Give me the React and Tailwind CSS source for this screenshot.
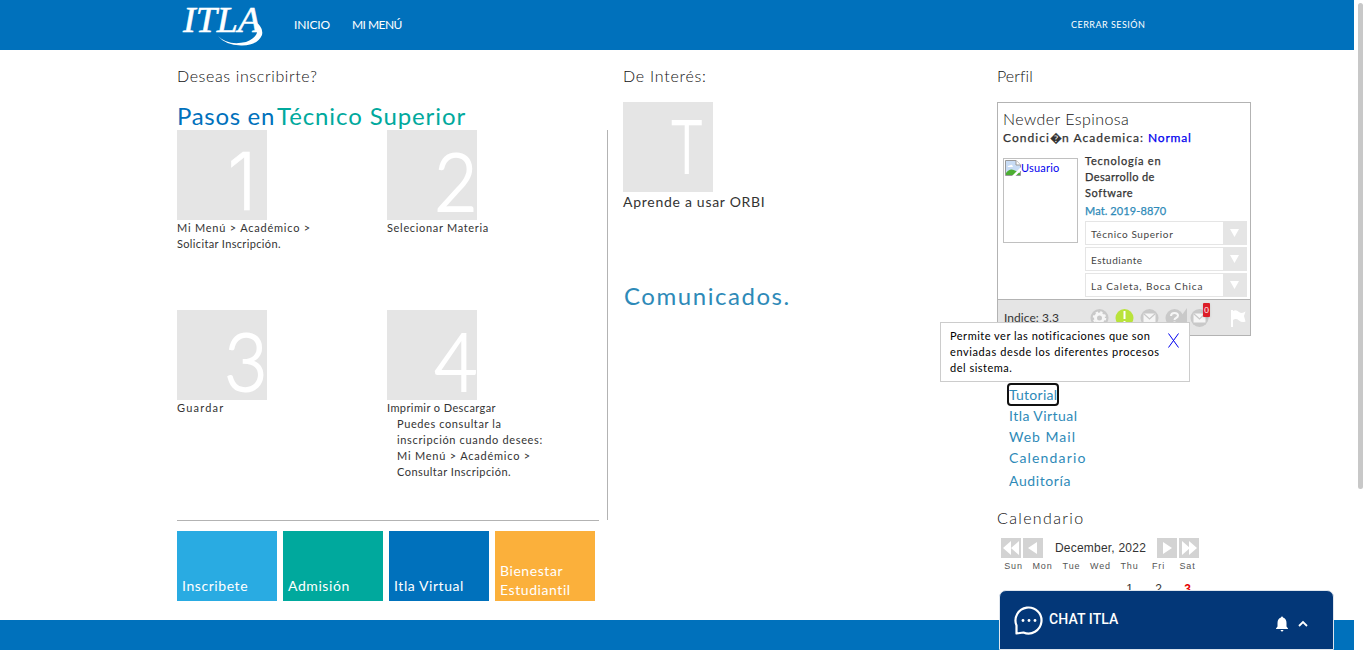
import React from "react";

function Step({ n, glyph = "", children }) {
  return (
    <div className="w-[210px] h-[180px]">
      <div className={`size-[90px] bg-[#e5e5e5] text-white text-[80px] font-light text-right leading-[101px] ${glyph}`}>
        <span className="inline-block origin-right scale-x-[.93]">{n}</span>
      </div>
      <div className="text-[11px] leading-4 whitespace-nowrap">{children}</div>
    </div>
  );
}

function Tile({ color, children }) {
  return (
    <div className={`flex items-end w-[100px] h-[70px] pl-[5px] text-white text-sm leading-[19px] tracking-[.57px] ${color}`}>
      <div>{children}</div>
    </div>
  );
}

function Select({ children }) {
  return (
    <div className="flex w-[162px] h-6 border border-[#e5e5e5] text-[10px] text-[#444]">
      <div className="w-[137px] pl-[5px] leading-[25px] whitespace-nowrap">{children}</div>
      <div className="flex-1 bg-[#e5e5e5] flex items-center justify-center">
        <svg width="9" height="8"><path d="M0 0H9L4.5 8Z" fill="#fff" /></svg>
      </div>
    </div>
  );
}

function Circle({ color = "#c9c9c9", children }) {
  return (
    <svg width="25" height="20" viewBox="0 0 25 20">
      <circle cx="12.5" cy="10" r="9" fill={color} />
      {children}
    </svg>
  );
}

function Envelope() {
  return (
    <g>
      <rect x="6.5" y="5.5" width="12" height="9" fill="#f6f6f6" />
      <path d="M6.5 5.5L12.5 11L18.5 5.5" fill="none" stroke="#c9c9c9" strokeWidth="1.2" />
    </g>
  );
}

function Nav({ d }) {
  return (
    <span className="size-5 bg-[#d3d3d3]">
      <svg width="20" height="20"><path d={d} fill="#fff" /></svg>
    </span>
  );
}

function BrokenImage() {
  return (
    <svg width="16" height="16" viewBox="0 0 16 16" className="shrink-0">
      <path d="M.5.5H11L15.500 5V15.500H.5Z" fill="#c8dcf5" stroke="#999" />
      <path d="M11 .5V5H15.500" fill="#fff" stroke="#999" />
      <path d="M2.500 7Q3 5 5 5.500Q7 3.500 8 7Z" fill="#fff" />
      <path d="M1 15V13Q5 7 11 11L15 13V15Z" fill="#4cae32" />
      <path d="M7 16L16 7V10.500L10.500 16Z" fill="#fff" />
    </svg>
  );
}

const days = ["Sun", "Mon", "Tue", "Wed", "Thu", "Fri", "Sat"];
const week = ["", "", "", "", "1", "2", "3"];

export default function App() {
  return (
    <div className="relative flex w-[1366px] h-[650px] overflow-hidden bg-white text-[#333] font-['Lato','Liberation_Sans',sans-serif]">
      <div className="w-[1354px] flex flex-col">
        <header className="flex h-[50px] bg-[#0071bc] text-white text-xs leading-[50px] pl-[180px] whitespace-nowrap">
          <svg width="84" height="50" viewBox="0 0 84 50">
            <text x="3" y="32" fontFamily="Liberation Serif" fontStyle="italic" fontSize="36" fill="#fff" stroke="#fff" strokeWidth=".5" textLength="78" lengthAdjust="spacingAndGlyphs">ITLA</text>
            <path d="M38 36Q48 46 66 42Q80 37 77 25L72 20Q84 26 82 35Q77 46 61 45.500Q45 45 38 36Z" fill="#fff" />
          </svg>
          <span className="ml-[30px] w-[58px] tracking-[-.15px]">INICIO</span>
          <span className="tracking-[-.55px] w-[719px]">MI MENÚ</span>
          <span className="text-[9px] tracking-[.48px]">CERRAR SESIÓN</span>
        </header>

        <main className="flex h-[570px] pl-[177px]">
          <section className="w-[446px] pt-4">
            <h2 className="text-base font-light leading-5 tracking-[.62px] text-[#111]">Deseas inscribirte?</h2>
            <h1 className="mt-[15px] h-[29px] text-2xl leading-[30px] whitespace-nowrap flex">
              <span className="w-[100px] text-[#0071bc] tracking-[.68px]">Pasos en</span>
              <span className="text-[#00a99d] tracking-[.9px]">Técnico Superior</span>
            </h1>
            <div className="w-[431px] h-[390px] border-r border-[#b3b3b3] flex flex-wrap content-start">
              <Step n="1" glyph="font-['Inter'] pr-[11px] [-webkit-text-stroke:.5px_#fff]">
                <div className="tracking-[.78px]">Mi Menú &gt; Académico &gt;</div>
                <div className="tracking-[.35px]">Solicitar Inscripción.</div>
              </Step>
              <Step n="2" glyph="[-webkit-text-stroke:2px_#fff]"><div className="tracking-[.68px]">Selecionar Materia</div></Step>
              <Step n="3" glyph="[-webkit-text-stroke:2px_#fff]"><div className="tracking-[1.2px]">Guardar</div></Step>
              <Step n="4" glyph="[-webkit-text-stroke:2px_#fff]">
                <div className="tracking-[.41px]">Imprimir o Descargar</div>
                <div className="pl-[10px]">
                  <div className="tracking-[.6px]">Puedes consultar la</div>
                  <div className="tracking-[.66px]">inscripción cuando desees:</div>
                  <div className="tracking-[.78px]">Mi Menú &gt; Académico &gt;</div>
                  <div className="tracking-[.46px]">Consultar Inscripción.</div>
                </div>
              </Step>
            </div>
            <div className="w-[422px] border-t border-[#b3b3b3]" />
            <div className="mt-[10px] flex gap-[6px]">
              <Tile color="bg-[#29abe2] pb-[6px]">Inscribete</Tile>
              <Tile color="bg-[#00a99d] pb-[6px]">Admisión</Tile>
              <Tile color="bg-[#0071bc] pb-[6px]">Itla Virtual</Tile>
              <Tile color="bg-[#fbb03b] pb-[2px]">Bienestar<br />Estudiantil</Tile>
            </div>
          </section>

          <section className="w-[374px] pt-4">
            <h2 className="text-base font-light leading-5 tracking-[.75px] text-[#111]">De Interés:</h2>
            <div className="mt-4 size-[90px] bg-[#e5e5e5] text-white text-[72px] font-light text-right leading-[87px] pr-[11px] [-webkit-text-stroke:2px_#fff]">
              <span className="inline-block origin-right scale-x-[.72]">T</span>
            </div>
            <div className="text-sm leading-5 tracking-[.72px]">Aprende a usar ORBI</div>
            <h1 className="mt-[69px] pl-px text-2xl leading-[30px] tracking-[1.55px] text-[#2e8ab8]">Comunicados.</h1>
          </section>

          <section className="w-[254px] pt-4">
            <h2 className="text-base font-light leading-5 tracking-[.1px] text-[#111]">Perfil</h2>
            <div className="mt-4 h-[234px] border border-[#b3b3b3] flex flex-col">
              <div className="mt-[5px] ml-[5px] text-base font-light leading-[21px] tracking-[.44px] text-[#111]">Newder Espinosa</div>
              <div className="ml-[5px] text-xs leading-[18px] whitespace-nowrap flex [-webkit-text-stroke:.25px]">
                <span className="w-[145px] tracking-[1.05px]">Condici<span className="tracking-[0px]">�</span>n Academica:</span>
                <span className="text-[#0000ee] tracking-[.82px]">Normal</span>
              </div>
              <div className="flex pl-[5px]">
                <div className="mt-[11px] w-[75px] h-[85px] border border-[#c0c0c0] p-px flex text-[11px] leading-4 tracking-[.2px] text-[#0000ee]">
                  <BrokenImage />
                  <span>Usuario</span>
                </div>
                <div className="ml-[7px] pt-[6px] text-[11px] leading-4 whitespace-nowrap">
                  <div className="[-webkit-text-stroke:.25px]">
                    <div className="tracking-[.8px]">Tecnología en</div>
                    <div className="tracking-[.4px]">Desarrollo de</div>
                    <div className="tracking-[.6px]">Software</div>
                    <div className="leading-5 tracking-[.1px] text-[#2e8ab8]">Mat. 2019-8870</div>
                  </div>
                  <div className="flex flex-col gap-[2px]">
                    <Select><span className="tracking-[.6px]">Técnico Superior</span></Select>
                    <Select><span className="tracking-[.5px]">Estudiante</span></Select>
                    <Select><span className="tracking-[.87px]">La Caleta, Boca Chica</span></Select>
                  </div>
                </div>
              </div>
              <div className="mt-auto h-[36px] bg-[#e5e5e5] border-t border-[#b3b3b3] flex pl-[6px] pt-2">
                <span className="w-[83px] text-xs leading-5 tracking-[.05px]">Indice: 3.3</span>
                <Circle>
                  <circle cx="12.500" cy="10" r="4" fill="none" stroke="#f6f6f6" strokeWidth="3" />
                  <circle cx="12.500" cy="10" r="5.500" fill="none" stroke="#f6f6f6" strokeWidth="2.500" strokeDasharray="2.200 2.120" />
                </Circle>
                <Circle color="#b9e33b"><path d="M11.500 3H13.500V11H11.500ZM11.500 13H13.500V15H11.500Z" fill="#fff" /></Circle>
                <Circle><Envelope /></Circle>
                <Circle>
                  <path d="M25 0V14H15Z" fill="#c9c9c9" />
                  <path d="M9 8Q9 5 12.500 5Q16 5 16 7.500Q16 9 14 10Q12.500 10.700 12.500 12M12.500 13.500V15.500" fill="none" stroke="#f6f6f6" strokeWidth="2" />
                </Circle>
                <div className="relative">
                  <Circle><Envelope /></Circle>
                  <span className="absolute left-[16px] -top-[5px] w-[7px] h-[14px] bg-[#dc1e28] rounded-[1px] text-white text-[8px] leading-[14px] text-center shadow">0</span>
                </div>
                <svg className="ml-[19px]" width="16" height="20"><path d="M0 2H2V19H0ZM2 3Q5 1 8 4Q11 6 14.500 3.500L13 8L14.500 13.500Q11 15 8 12.500Q5 10 2 12Z" fill="#fff" /></svg>
              </div>
            </div>
            <nav className="mt-[47px] ml-[12px] flex flex-col items-start text-sm text-[#2e8ab8] leading-[21px] whitespace-nowrap">
              <a className="h-[23px] -ml-[2px] border-2 border-[#111] rounded-[4px] leading-[19px] tracking-[.25px] w-[52px]">Tutorial</a>
              <a className="-mt-px tracking-[.45px]">Itla Virtual</a>
              <a className="tracking-[1px]">Web Mail</a>
              <a className="tracking-[1.15px]">Calendario</a>
              <a className="mt-[2px] tracking-[.6px]">Auditoría</a>
            </nav>
            <h2 className="mt-[17px] text-base font-light leading-5 tracking-[1.35px] text-[#111]">Calendario</h2>
            <div className="mt-[10px] ml-1 flex gap-[2px] font-['Liberation_Sans']">
              <Nav d="M10 3V17L2 10ZM18 3V17L10 10Z" />
              <Nav d="M14 4V16L5 10Z" />
              <span className="w-[110px] pl-px text-center text-xs leading-5 tracking-[.22px]">December, 2022</span>
              <Nav d="M6 4V16L15 10Z" />
              <Nav d="M3 3V17L11 10ZM10 3V17L18 10Z" />
            </div>
            <div className="ml-[2px] w-[203px] grid grid-cols-7 text-center text-[9px] leading-4 tracking-[.9px] text-[#555] font-['Liberation_Sans']">
              {days.map((d) => <span key={d}>{d}</span>)}
            </div>
            <div className="mt-[7px] ml-[2px] w-[203px] grid grid-cols-7 text-center text-xs leading-4 font-['Liberation_Sans']">
              {week.map((d, i) => <span key={i} className={i === 6 ? "font-bold text-[#e60000]" : ""}>{d}</span>)}
            </div>
          </section>
        </main>

        <footer className="h-[30px] shrink-0 bg-[#0071bc]" />
      </div>

      <div className="w-3 pl-1 pt-[3px]"><div className="w-[5px] h-[486px] rounded-full bg-[#c8c8c8]" /></div>

      <div className="absolute left-[940px] top-[322px] w-[250px] h-[60px] border border-[#ccc] bg-white pl-[9px] pt-[5px] text-[11px] leading-4 text-black whitespace-nowrap">
        <div className="tracking-[.5px]">Permite ver las notificaciones que son</div>
        <div className="tracking-[.6px]">enviadas desde los diferentes procesos</div>
        <div className="tracking-[.5px]">del sistema.</div>
        <svg className="absolute left-[227px] top-[10px]" width="11" height="15"><path d="M.5.5L10.500 14.500M10.500.5L.5 14.500" stroke="#0000ee" fill="none" /></svg>
      </div>

      <div className="absolute left-[999px] top-[590px] w-[335px] h-[60px] border border-[#dfe6ee] rounded-t-[7px] bg-[#033778] text-white flex items-center pl-[14px] font-['Liberation_Sans']">
        <svg width="30" height="31" viewBox="0 0 30 31" fill="none" stroke="#fff" strokeWidth="2.200">
          <path d="M2.500 28.500V20.500A13 13 0 1 1 9.500 27.500Z" strokeLinejoin="round" />
          <g fill="#fff" stroke="none"><circle cx="9" cy="15.500" r="1.400" /><circle cx="15" cy="15.500" r="1.400" /><circle cx="21" cy="15.500" r="1.400" /></g>
        </svg>
        <span className="ml-[5px] mb-[2px] w-[226px] text-sm font-medium font-['Roboto'] tracking-[.1px]">CHAT ITLA</span>
        <svg className="mt-[8px]" width="14" height="16" viewBox="0 0 14 16" fill="#fff"><path d="M6 1.500A1 1 0 0 1 8 1.500Q11.500 2.500 11.500 7V10.500L13 12.500V13H1V12.500L2.500 10.500V7Q2.500 2.500 6 1.500ZM5.500 14H8.500Q8 15.500 7 15.500Q6 15.500 5.500 14Z" /></svg>
        <svg className="ml-[9px] mt-[7px]" width="10" height="7"><path d="M1 6L5 2L9 6" fill="none" stroke="#fff" strokeWidth="1.800" /></svg>
      </div>
    </div>
  );
}
